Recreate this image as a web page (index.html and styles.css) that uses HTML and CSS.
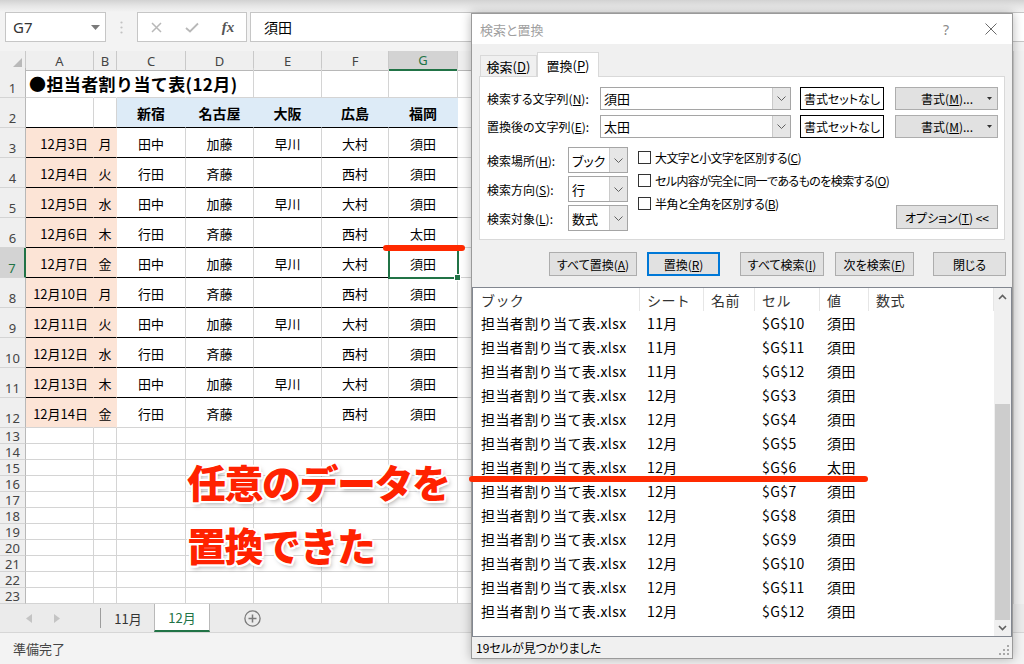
FILE: index.html
```html
<!DOCTYPE html>
<html lang="ja">
<head>
<meta charset="utf-8">
<title>検索と置換</title>
<link rel="stylesheet" href="styles.css">
</head>
<body>
<div class="app">
  <div class="fbar">
    <div class="namebox"><span class="nb-text">G7</span><svg width="9" height="5" viewBox="0 0 9 5"><path d="M0 0H9L4.5 5Z" fill="#7a7a7a"/></svg></div>
    <div class="fsep"><svg width="3" height="13" viewBox="0 0 3 13"><circle cx="1.5" cy="1.5" r="1.1" fill="#c2c2c2"/><circle cx="1.5" cy="6.5" r="1.1" fill="#c2c2c2"/><circle cx="1.5" cy="11.5" r="1.1" fill="#c2c2c2"/></svg></div>
    <div class="fxbox">
      <span class="fxi"><svg width="11" height="11" viewBox="0 0 11 11"><path d="M1 1L10 10M10 1L1 10" stroke="#b8b8b8" stroke-width="1.5"/></svg></span>
      <span class="fxi"><svg width="14" height="11" viewBox="0 0 14 11"><path d="M1 6L5 9.5L13 1.5" stroke="#b8b8b8" stroke-width="1.8" fill="none"/></svg></span>
      <span class="fxi fxt">fx</span>
    </div>
    <div class="finput">須田</div>
  </div>

  <div class="sheet">
    <div class="grid">
      <div class="r hdr"><div class="corner"><svg width="9" height="9" viewBox="0 0 9 9"><path d="M9 0V9H0Z" fill="#b9b9b9"/></svg></div><div>A</div><div>B</div><div>C</div><div>D</div><div>E</div><div>F</div><div class="on">G</div><div class="h"></div></div>

      <div class="r r30"><div class="rh">1</div><div class="c ttl">●担当者割り当て表(12月)</div><div class="c nb"></div><div class="c nb"></div><div class="c"></div><div class="c"></div><div class="c"></div><div class="c"></div><div class="h"></div></div>
      <div class="r r30 bk"><div class="rh">2</div><div class="c"></div><div class="c"></div><div class="c bl">新宿</div><div class="c bl">名古屋</div><div class="c bl">大阪</div><div class="c bl">広島</div><div class="c bl">福岡</div><div class="h"></div></div>
      <div class="r r30 bk"><div class="rh">3</div><div class="c pe dt">12月3日</div><div class="c pe">月</div><div class="c">田中</div><div class="c">加藤</div><div class="c">早川</div><div class="c">大村</div><div class="c">須田</div><div class="h"></div></div>
      <div class="r r30 bk"><div class="rh">4</div><div class="c pe dt">12月4日</div><div class="c pe">火</div><div class="c">行田</div><div class="c">斉藤</div><div class="c"></div><div class="c">西村</div><div class="c">須田</div><div class="h"></div></div>
      <div class="r r30 bk"><div class="rh">5</div><div class="c pe dt">12月5日</div><div class="c pe">水</div><div class="c">田中</div><div class="c">加藤</div><div class="c">早川</div><div class="c">大村</div><div class="c">須田</div><div class="h"></div></div>
      <div class="r r30 bk"><div class="rh">6</div><div class="c pe dt">12月6日</div><div class="c pe">木</div><div class="c">行田</div><div class="c">斉藤</div><div class="c"></div><div class="c">西村</div><div class="c">太田</div><div class="h"></div></div>
      <div class="r r30 bk"><div class="rh on">7</div><div class="c pe dt">12月7日</div><div class="c pe">金</div><div class="c">田中</div><div class="c">加藤</div><div class="c">早川</div><div class="c">大村</div><div class="c sel">須田</div><div class="h"></div></div>
      <div class="r r30 bk"><div class="rh">8</div><div class="c pe dt">12月10日</div><div class="c pe">月</div><div class="c">行田</div><div class="c">斉藤</div><div class="c"></div><div class="c">西村</div><div class="c">須田</div><div class="h"></div></div>
      <div class="r r30 bk"><div class="rh">9</div><div class="c pe dt">12月11日</div><div class="c pe">火</div><div class="c">田中</div><div class="c">加藤</div><div class="c">早川</div><div class="c">大村</div><div class="c">須田</div><div class="h"></div></div>
      <div class="r r30 bk"><div class="rh">10</div><div class="c pe dt">12月12日</div><div class="c pe">水</div><div class="c">行田</div><div class="c">斉藤</div><div class="c"></div><div class="c">西村</div><div class="c">須田</div><div class="h"></div></div>
      <div class="r r30 bk"><div class="rh">11</div><div class="c pe dt">12月13日</div><div class="c pe">木</div><div class="c">田中</div><div class="c">加藤</div><div class="c">早川</div><div class="c">大村</div><div class="c">須田</div><div class="h"></div></div>
      <div class="r r30"><div class="rh">12</div><div class="c pe dt">12月14日</div><div class="c pe">金</div><div class="c">行田</div><div class="c">斉藤</div><div class="c"></div><div class="c">西村</div><div class="c">須田</div><div class="h"></div></div>

      <div class="r r16"><div class="rh">13</div><div></div><div></div><div></div><div></div><div></div><div></div><div></div><div class="h"></div></div>
      <div class="r r16"><div class="rh">14</div><div></div><div></div><div></div><div></div><div></div><div></div><div></div><div class="h"></div></div>
      <div class="r r16"><div class="rh">15</div><div></div><div></div><div></div><div></div><div></div><div></div><div></div><div class="h"></div></div>
      <div class="r r16"><div class="rh">16</div><div></div><div></div><div></div><div></div><div></div><div></div><div></div><div class="h"></div></div>
      <div class="r r16"><div class="rh">17</div><div></div><div></div><div></div><div></div><div></div><div></div><div></div><div class="h"></div></div>
      <div class="r r16"><div class="rh">18</div><div></div><div></div><div></div><div></div><div></div><div></div><div></div><div class="h"></div></div>
      <div class="r r16"><div class="rh">19</div><div></div><div></div><div></div><div></div><div></div><div></div><div></div><div class="h"></div></div>
      <div class="r r16"><div class="rh">20</div><div></div><div></div><div></div><div></div><div></div><div></div><div></div><div class="h"></div></div>
      <div class="r r16"><div class="rh">21</div><div></div><div></div><div></div><div></div><div></div><div></div><div></div><div class="h"></div></div>
      <div class="r r16"><div class="rh">22</div><div></div><div></div><div></div><div></div><div></div><div></div><div></div><div class="h"></div></div>
      <div class="r r16"><div class="rh">23</div><div></div><div></div><div></div><div></div><div></div><div></div><div></div><div class="h"></div></div>
    </div>
    <div class="vsb"></div>
  </div>

  <div class="tabbar">
    <div class="nav">
      <svg class="navl" width="6" height="9" viewBox="0 0 6 9"><path d="M6 0V9L0 4.5Z" fill="#c4c4c4"/></svg>
      <svg class="navr" width="6" height="9" viewBox="0 0 6 9"><path d="M0 0V9L6 4.5Z" fill="#c4c4c4"/></svg>
    </div>
    <div class="tsep"></div>
    <div class="tab">11月</div>
    <div class="tab on">12月</div>
    <div class="add"><svg width="17" height="17" viewBox="0 0 17 17"><circle cx="8.5" cy="8.5" r="7.6" fill="none" stroke="#7a7a7a" stroke-width="1.3"/><path d="M8.5 4.5V12.5M4.5 8.5H12.5" stroke="#7a7a7a" stroke-width="1.5"/></svg></div>
  </div>
  <div class="statusbar">準備完了</div>
</div>

<div class="annot">任意のデータを<br>置換できた</div>

<div class="dialog">
  <div class="dtitle">
    <span class="dt-text">検索と置換</span>
    <span class="dt-help">?</span>
    <span class="dt-close"><svg width="12" height="12" viewBox="0 0 12 12"><path d="M0.5 0.5L11.5 11.5M11.5 0.5L0.5 11.5" stroke="#6a6a6a" stroke-width="1"/></svg></span>
  </div>
  <div class="dtabs">
    <div class="dtab">検索(<u>D</u>)</div>
    <div class="dtab on">置換(<u>P</u>)</div>
  </div>
  <div class="dpanel">
    <div class="frow">
      <div class="flabel">検索する文字列(<u>N</u>):</div>
      <div class="combo"><span class="cv">須田</span><span class="dd"><svg width="9" height="5" viewBox="0 0 9 5"><path d="M0.5 0.5L4.5 4.5L8.5 0.5" stroke="#606060" fill="none"/></svg></span></div>
      <div class="btn nofmt">書式セットなし</div>
      <div class="btn fmt">書式(<u>M</u>)...<svg class="arr" width="5" height="3" viewBox="0 0 5 3"><path d="M0 0H5L2.5 3Z" fill="#333"/></svg></div>
    </div>
    <div class="frow">
      <div class="flabel">置換後の文字列(<u>E</u>):</div>
      <div class="combo"><span class="cv">太田</span><span class="dd"><svg width="9" height="5" viewBox="0 0 9 5"><path d="M0.5 0.5L4.5 4.5L8.5 0.5" stroke="#606060" fill="none"/></svg></span></div>
      <div class="btn nofmt">書式セットなし</div>
      <div class="btn fmt">書式(<u>M</u>)...<svg class="arr" width="5" height="3" viewBox="0 0 5 3"><path d="M0 0H5L2.5 3Z" fill="#333"/></svg></div>
    </div>
    <div class="lower">
      <div class="opts">
        <div class="orow"><span class="olabel">検索場所(<u>H</u>):</span><div class="combo"><span class="cv">ブック</span><span class="dd"><svg width="9" height="5" viewBox="0 0 9 5"><path d="M0.5 0.5L4.5 4.5L8.5 0.5" stroke="#606060" fill="none"/></svg></span></div></div>
        <div class="orow"><span class="olabel">検索方向(<u>S</u>):</span><div class="combo"><span class="cv">行</span><span class="dd"><svg width="9" height="5" viewBox="0 0 9 5"><path d="M0.5 0.5L4.5 4.5L8.5 0.5" stroke="#606060" fill="none"/></svg></span></div></div>
        <div class="orow"><span class="olabel">検索対象(<u>L</u>):</span><div class="combo"><span class="cv">数式</span><span class="dd"><svg width="9" height="5" viewBox="0 0 9 5"><path d="M0.5 0.5L4.5 4.5L8.5 0.5" stroke="#606060" fill="none"/></svg></span></div></div>
      </div>
      <div class="checks">
        <div class="chk"><span class="box"></span>大文字と小文字を区別する(<u>C</u>)</div>
        <div class="chk"><span class="box"></span>セル内容が完全に同一であるものを検索する(<u>O</u>)</div>
        <div class="chk"><span class="box"></span>半角と全角を区別する(<u>B</u>)</div>
      </div>
      <div class="btn optbtn">オプション(<u>T</u>) &lt;&lt;</div>
    </div>
  </div>
  <div class="dbtns">
    <div class="btn b1">すべて置換(<u>A</u>)</div>
    <div class="btn b2">置換(<u>R</u>)</div>
    <div class="btn b3">すべて検索(<u>I</u>)</div>
    <div class="btn b4">次を検索(<u>F</u>)</div>
    <div class="btn b5">閉じる</div>
  </div>
  <div class="list">
    <div class="lmain">
      <div class="lgrid lhead"><span>ブック</span><span>シート</span><span>名前</span><span>セル</span><span>値</span><span>数式</span></div>
      <div class="lgrid"><span>担当者割り当て表.xlsx</span><span>11月</span><span></span><span>$G$10</span><span>須田</span><span></span></div>
      <div class="lgrid"><span>担当者割り当て表.xlsx</span><span>11月</span><span></span><span>$G$11</span><span>須田</span><span></span></div>
      <div class="lgrid"><span>担当者割り当て表.xlsx</span><span>11月</span><span></span><span>$G$12</span><span>須田</span><span></span></div>
      <div class="lgrid"><span>担当者割り当て表.xlsx</span><span>12月</span><span></span><span>$G$3</span><span>須田</span><span></span></div>
      <div class="lgrid"><span>担当者割り当て表.xlsx</span><span>12月</span><span></span><span>$G$4</span><span>須田</span><span></span></div>
      <div class="lgrid"><span>担当者割り当て表.xlsx</span><span>12月</span><span></span><span>$G$5</span><span>須田</span><span></span></div>
      <div class="lgrid"><span>担当者割り当て表.xlsx</span><span>12月</span><span></span><span>$G$6</span><span>太田</span><span></span></div>
      <div class="lgrid"><span>担当者割り当て表.xlsx</span><span>12月</span><span></span><span>$G$7</span><span>須田</span><span></span></div>
      <div class="lgrid"><span>担当者割り当て表.xlsx</span><span>12月</span><span></span><span>$G$8</span><span>須田</span><span></span></div>
      <div class="lgrid"><span>担当者割り当て表.xlsx</span><span>12月</span><span></span><span>$G$9</span><span>須田</span><span></span></div>
      <div class="lgrid"><span>担当者割り当て表.xlsx</span><span>12月</span><span></span><span>$G$10</span><span>須田</span><span></span></div>
      <div class="lgrid"><span>担当者割り当て表.xlsx</span><span>12月</span><span></span><span>$G$11</span><span>須田</span><span></span></div>
      <div class="lgrid"><span>担当者割り当て表.xlsx</span><span>12月</span><span></span><span>$G$12</span><span>須田</span><span></span></div>
    </div>
    <div class="lscroll">
      <div class="sarrow"><svg width="9" height="6" viewBox="0 0 9 6"><path d="M1 5L4.5 1.5L8 5" stroke="#606060" stroke-width="1.6" fill="none"/></svg></div>
      <div class="strack"><div class="sthumb"></div></div>
      <div class="sarrow down"><svg width="9" height="6" viewBox="0 0 9 6"><path d="M1 1L4.5 4.5L8 1" stroke="#606060" stroke-width="1.6" fill="none"/></svg></div>
    </div>
  </div>
  <div class="dstatus">
    <span>19セルが見つかりました</span>
    <svg class="grip" width="10" height="10" viewBox="0 0 10 10"><g fill="#a8a8a8"><rect x="8" y="0" width="2" height="2"/><rect x="4" y="4" width="2" height="2"/><rect x="8" y="4" width="2" height="2"/><rect x="0" y="8" width="2" height="2"/><rect x="4" y="8" width="2" height="2"/><rect x="8" y="8" width="2" height="2"/></g></svg>
  </div>
</div>

<div class="mark m1"></div>
<div class="mark m2"></div>
</body>
</html>
```

FILE: styles.css
```css
html, body {
  margin: 0;
  padding: 0;
}
body {
  width: 1024px;
  height: 664px;
  overflow: hidden;
  position: relative;
  background: #fff;
  font-family: "Noto Sans CJK JP", sans-serif;
  color: #000;
}
.app {
  display: flex;
  flex-direction: column;
  height: 664px;
}

/* formula bar */
.fbar {
  flex: none;
  height: 51px;
  box-sizing: border-box;
  padding: 12px 0 0 5px;
  display: flex;
  align-items: flex-start;
  background: linear-gradient(#d2d2d2 0, #e6e6e6 6px, #f3f3f3 12px);
}
.namebox {
  width: 101px;
  height: 30px;
  box-sizing: border-box;
  border: 1px solid #c6c6c6;
  background: #fff;
  display: flex;
  align-items: center;
  justify-content: space-between;
  padding: 0 5px 0 7px;
}
.nb-text {
  font: 15px "Noto Sans", sans-serif;
  color: #333;
}
.fsep {
  width: 31px;
  height: 30px;
  display: flex;
  align-items: center;
  justify-content: center;
}
.fxbox {
  width: 110px;
  height: 30px;
  box-sizing: border-box;
  border: 1px solid #c6c6c6;
  background: #fff;
  display: flex;
  align-items: center;
}
.fxi {
  width: 36px;
  display: flex;
  justify-content: center;
  align-items: center;
}
.fxt {
  font: italic bold 15px "Liberation Serif", serif;
  color: #555;
}
.finput {
  flex: 1;
  margin-left: 3px;
  height: 30px;
  box-sizing: border-box;
  border: 1px solid #c6c6c6;
  border-right: none;
  background: #fff;
  display: flex;
  align-items: center;
  padding-left: 13px;
  font-size: 14px;
}

/* sheet grid */
.sheet {
  flex: none;
  height: 553px;
  display: flex;
}
.grid {
  flex: 1;
  background: #fff;
}
.vsb {
  width: 11px;
  background: #f1f1f1;
  border-left: 1px solid #d4d4d4;
  box-sizing: border-box;
}
.r {
  display: grid;
  grid-template-columns: 26px 68px 23px 69px 68px 68px 67px 69px 1fr;
}
.r30 { height: 30px; }
.r16 { height: 16px; }
.r > div {
  box-sizing: border-box;
  min-width: 0;
  border-right: 1px solid #d4d4d4;
  border-bottom: 1px solid #d4d4d4;
  display: flex;
  align-items: center;
  justify-content: center;
  font-size: 13px;
  white-space: nowrap;
}
.r > .c { padding-top: 1px; }
.r > .h { border-right: none; }
.hdr { height: 17px; }
.hdr > div {
  background: #efefef;
  border-right-color: #c9c9c9;
  border-bottom-color: #b8b8b8;
  font: 13px "Noto Sans", sans-serif;
  color: #444;
}
.hdr > .on {
  background: #d3d3d3;
  color: #217346;
  border-bottom: 2px solid #217346;
}
.hdr > .corner {
  justify-content: flex-end;
  align-items: flex-end;
  padding: 0 3px 3px 0;
}
.r > .rh {
  background: #efefef;
  border-right-color: #b8b8b8;
  border-bottom-color: #d4d4d4;
  font: 13px/14px "Noto Sans", sans-serif;
  color: #444;
}
.r30 > .rh {
  align-items: flex-end;
  padding-bottom: 2px;
}
.r > .rh.on {
  background: #d3d3d3;
  color: #217346;
  border-right: 2px solid #217346;
}
.bk > .c { border-bottom-color: #000; }
.r > .ttl {
  justify-content: flex-start;
  padding-left: 3px;
  font-size: 17px;
  font-weight: 700;
  letter-spacing: 0.4px;
  overflow: visible;
  border-right-color: transparent;
}
.r > .nb { border-right-color: transparent; }
.r > .bl {
  background: #ddebf7;
  border-right-color: #ddebf7;
  font-size: 14px;
  font-weight: 700;
}
.r > .pe {
  background: #fce4d6;
  border-right-color: #fce4d6;
}
.r > .dt {
  justify-content: flex-end;
  padding-right: 5px;
}
.r > .sel { position: relative; }
.sel::after {
  content: "";
  position: absolute;
  left: -1px;
  top: -1px;
  right: -2px;
  bottom: -2px;
  border: 2px solid #217346;
}
.sel::before {
  content: "";
  position: absolute;
  right: -4px;
  bottom: -4px;
  width: 5px;
  height: 5px;
  background: #217346;
  border: 1px solid #fff;
  z-index: 1;
}

/* sheet tabs */
.tabbar {
  flex: none;
  height: 28px;
  display: flex;
  background: #ebebeb;
}
.nav {
  width: 100px;
  display: flex;
  align-items: center;
}
.navl { margin-left: 26px; }
.navr { margin-left: 22px; }
.tsep {
  width: 1px;
  background: #9d9d9d;
  margin: 4px 0 4px;
}
.tab {
  width: 54px;
  display: flex;
  align-items: center;
  justify-content: center;
  font-size: 13px;
  color: #333;
}
.tab.on {
  height: 26px;
  background: #fff;
  color: #217346;
  border-bottom: 2px solid #217346;
  border-right: 1px solid #b9b9b9;
  border-left: 1px solid #b9b9b9;
  margin-left: -1px;
}
.add {
  margin-left: 34px;
  display: flex;
  align-items: center;
}
.statusbar {
  flex: 1;
  background: #f3f3f3;
  border-top: 1px solid #d6d6d6;
  display: flex;
  align-items: center;
  padding-left: 13px;
  font-size: 13px;
  color: #444;
}

/* annotation */
.annot {
  position: absolute;
  left: 187px;
  top: 450px;
  z-index: 4;
  font-size: 39px;
  line-height: 63px;
  font-weight: 900;
  letter-spacing: -1.5px;
  color: #ff2200;
  white-space: nowrap;
  text-shadow:
    2px 0 0 #fff, -2px 0 0 #fff, 0 2px 0 #fff, 0 -2px 0 #fff,
    1.5px 1.5px 0 #fff, -1.5px -1.5px 0 #fff, 1.5px -1.5px 0 #fff, -1.5px 1.5px 0 #fff,
    2px 3px 5px rgba(0, 0, 0, 0.35);
}
.mark {
  position: absolute;
  height: 6px;
  border-radius: 3px;
  background: #ff2a00;
  z-index: 10;
}
.m1 { left: 383px; top: 245px; width: 82px; }
.m2 { left: 469px; top: 476px; width: 399px; }

/* dialog */
.dialog {
  position: absolute;
  left: 471px;
  top: 13px;
  width: 542px;
  height: 646px;
  box-sizing: border-box;
  border: 1px solid #9a9a9a;
  background: #f0f0f0;
  box-shadow: 0 0 10px rgba(0, 0, 0, 0.28);
  display: flex;
  flex-direction: column;
  font-size: 12px;
  font-feature-settings: "palt";
  z-index: 5;
}
.dtitle {
  flex: none;
  height: 30px;
  background: #fff;
  display: flex;
  align-items: center;
}
.dt-text {
  flex: 1;
  padding-left: 8px;
  color: #9f9f9f;
  font-size: 13px;
}
.dt-help {
  width: 46px;
  text-align: center;
  color: #8a8a8a;
  font: 14px "Noto Sans", sans-serif;
}
.dt-close {
  width: 43px;
  display: flex;
  justify-content: center;
}
.dtabs {
  flex: none;
  height: 24px;
  margin: 8px 0 0 8px;
  display: flex;
  align-items: flex-end;
}
.dtab {
  width: 57px;
  height: 21px;
  box-sizing: border-box;
  border: 1px solid #d9d9d9;
  border-bottom: none;
  display: flex;
  align-items: center;
  justify-content: center;
  font-size: 13px;
}
.dtab.on {
  width: 62px;
  height: 25px;
  margin-bottom: -1px;
  background: #fff;
  position: relative;
  z-index: 1;
}
.dpanel {
  flex: none;
  margin: 0 7px;
  height: 164px;
  box-sizing: border-box;
  border: 1px solid #d9d9d9;
  background: #fff;
  padding: 10px 6px 8px 7px;
}
.frow {
  display: flex;
  height: 23px;
}
.frow + .frow { margin-top: 5px; }
.flabel {
  width: 113px;
  display: flex;
  align-items: center;
}
.combo {
  width: 191px;
  box-sizing: border-box;
  border: 1px solid #a5a5a5;
  background: #fff;
  display: flex;
}
.cv {
  flex: 1;
  display: flex;
  align-items: center;
  padding-left: 3px;
  font-size: 13px;
}
.dd {
  width: 17px;
  background: #e6e6e6;
  border-left: 1px solid #cacaca;
  display: flex;
  align-items: center;
  justify-content: center;
}
.btn {
  box-sizing: border-box;
  background: #e1e1e1;
  border: 1px solid #adadad;
  display: flex;
  align-items: center;
  justify-content: center;
  font-size: 12px;
  white-space: nowrap;
}
.nofmt {
  width: 84px;
  margin-left: 9px;
  background: #fff;
  border: 1px solid #000;
}
.fmt {
  width: 103px;
  margin-left: 11px;
  justify-content: flex-end;
  padding-right: 5px;
}
.fmt .arr { margin-left: 14px; }
.lower {
  display: flex;
  margin-top: 9px;
  height: 84px;
}
.opts {
  width: 141px;
  display: flex;
  flex-direction: column;
  gap: 3px;
}
.orow {
  height: 26px;
  display: flex;
}
.olabel {
  width: 81px;
  display: flex;
  align-items: center;
}
.orow .combo { width: 60px; }
.checks {
  flex: 1;
  margin-left: 10px;
  display: flex;
  flex-direction: column;
  gap: 3px;
}
.chk {
  height: 20px;
  display: flex;
  align-items: center;
  white-space: nowrap;
  letter-spacing: -0.6px;
}
.box {
  flex: none;
  width: 13px;
  height: 13px;
  box-sizing: border-box;
  border: 1px solid #333;
  background: #fff;
  margin-right: 4px;
}
.optbtn {
  width: 102px;
  height: 24px;
  align-self: flex-end;
  margin-bottom: 2px;
}
.dbtns {
  flex: none;
  height: 24px;
  margin-top: 12px;
  padding-left: 77px;
  display: flex;
}
.b1 { width: 88px; }
.b2 { width: 73px; margin-left: 10px; border: 2px solid #0078d7; }
.b3 { width: 84px; margin-left: 20px; }
.b4 { width: 79px; margin-left: 11px; }
.b5 { width: 73px; margin-left: 19px; }
.list {
  flex: none;
  margin-top: 11px;
  height: 350px;
  box-sizing: border-box;
  border: 1px solid #828790;
  background: #fff;
  display: flex;
  font-feature-settings: normal;
}
.lmain { flex: 1; }
.lgrid {
  display: grid;
  grid-template-columns: 167px 64px 51px 65px 49px 1fr;
  height: 24px;
  align-items: center;
}
.lgrid span {
  padding-left: 7px;
  white-space: nowrap;
  font-size: 14px;
  letter-spacing: 0.4px;
}
.lgrid span:first-child { padding-left: 8px; }
.lhead { height: 23px; align-items: stretch; }
.lhead span {
  display: flex;
  align-items: center;
  border-right: 1px solid #e6e6e6;
  color: #333;
}
.lscroll {
  width: 17px;
  background: #f0f0f0;
  display: flex;
  flex-direction: column;
}
.sarrow {
  height: 17px;
  display: flex;
  align-items: center;
  justify-content: center;
}
.sarrow.down { height: 16px; }
.strack { flex: 1; }
.sthumb {
  margin: 99px 1px 0;
  height: 216px;
  background: #cdcdcd;
}
.dstatus {
  flex: none;
  height: 20px;
  display: flex;
  align-items: center;
  padding-left: 4px;
  padding-right: 3px;
  font-size: 12px;
}
.grip {
  margin-left: auto;
  align-self: flex-end;
  margin-bottom: 2px;
}
```
